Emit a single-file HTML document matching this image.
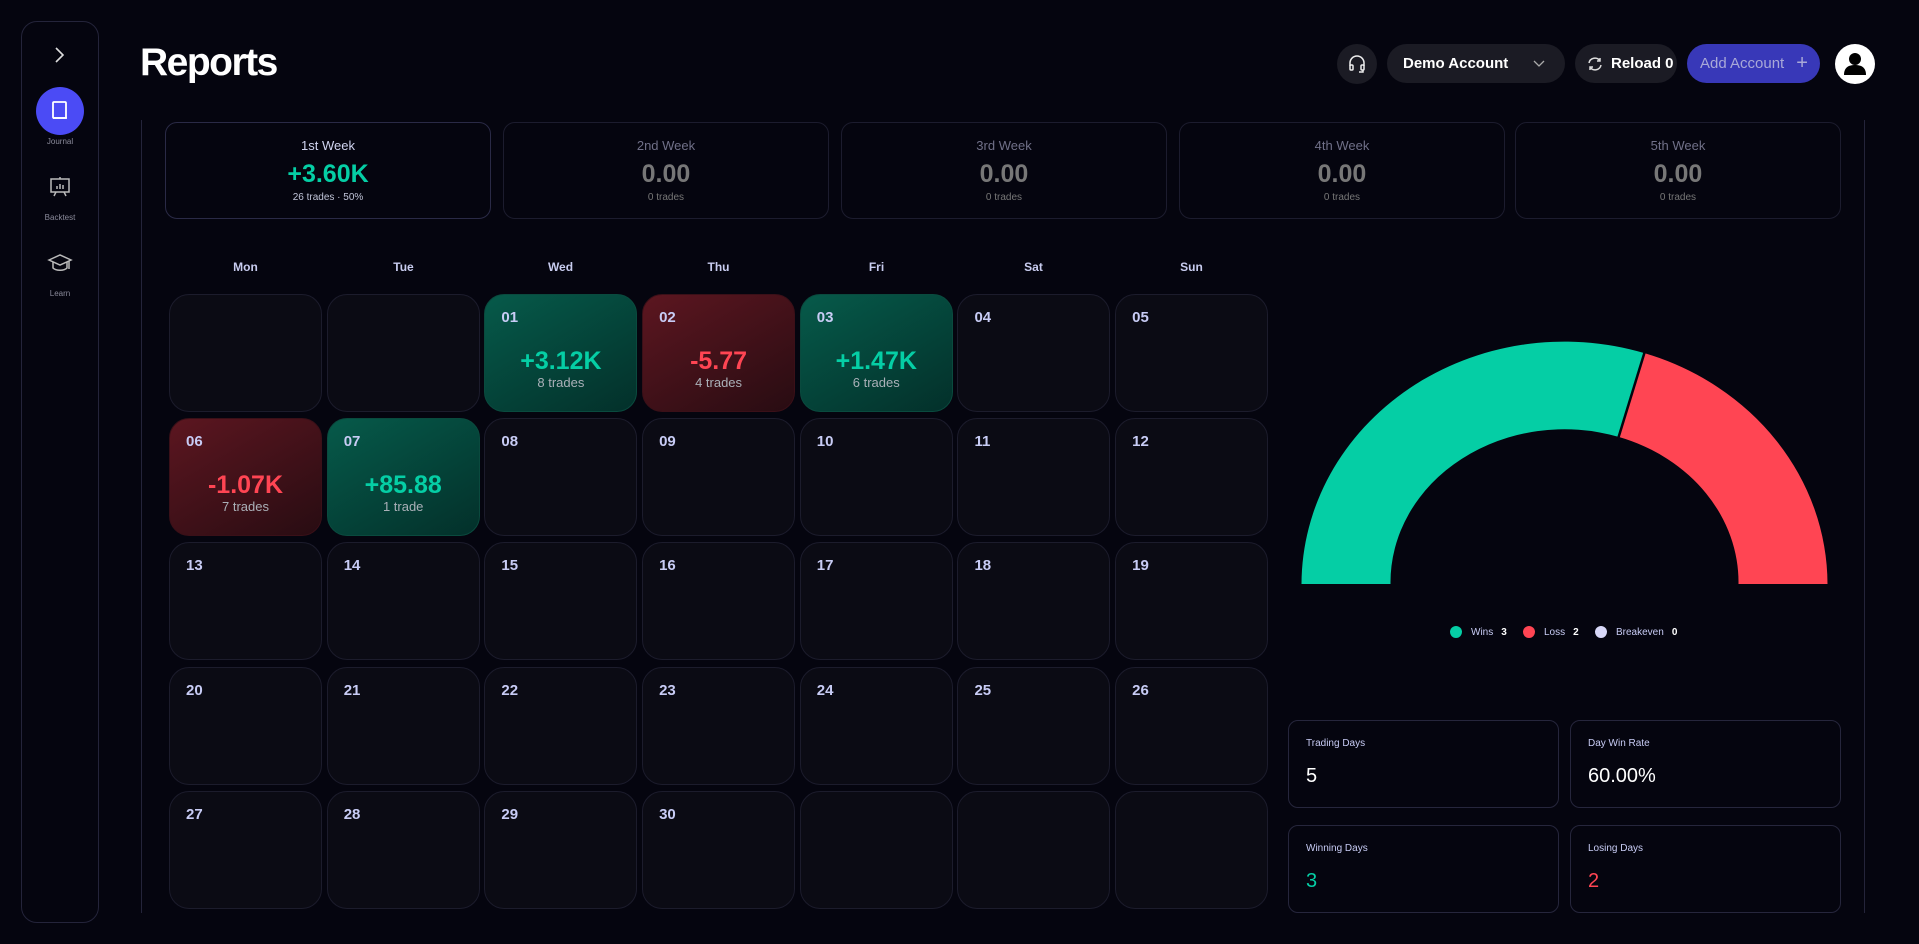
<!DOCTYPE html>
<html><head><meta charset="utf-8"><style>
*{box-sizing:border-box;margin:0;padding:0}
body{width:1919px;height:944px;background:#05050f;font-family:"Liberation Sans",sans-serif;color:#fff;position:relative;overflow:hidden}
.abs{position:absolute}
.side{left:21px;top:21px;width:78px;height:902px;border:1px solid #24243a;border-radius:16px}
.slabel{position:absolute;width:78px;left:21px;text-align:center;font-size:8px;color:#8a8a9a}
h1{position:absolute;left:140px;top:41px;font-size:39px;font-weight:700;letter-spacing:-1.5px}
.pill{position:absolute;top:44px;height:39px;border-radius:20px;background:#1b1b24;font-size:15px;font-weight:700;display:flex;align-items:center}
.wk{position:absolute;top:122px;width:326px;height:97px;border:1px solid #1c1c2e;border-radius:12px;text-align:center}
.wk .l{margin-top:15px;font-size:13px;color:#707088}
.wk .v{margin-top:7px;font-size:25px;font-weight:700;color:#777}
.wk .t{margin-top:3px;font-size:10px;color:#777}
.dh{position:absolute;top:260px;width:153px;text-align:center;font-size:12px;font-weight:700;color:#c8ccef}
.grid{position:absolute;left:169px;top:294px;display:grid;grid-template-columns:repeat(7,153px);grid-auto-rows:118px;column-gap:4.7px;row-gap:6.2px}
.c{border:1px solid #1c1c2c;background:#0b0b14;border-radius:20px;position:relative}
.c .n{position:absolute;left:16px;top:14px;font-size:15px;font-weight:700;color:#c8ccf5}
.c .v{position:absolute;left:0;right:0;top:52px;text-align:center;font-size:25px;font-weight:700}
.c .t{position:absolute;left:0;right:0;top:80px;text-align:center;font-size:13px;color:#aab0b8}
.g{background:linear-gradient(150deg,#065a4a,#03302a);border-color:#0a4a3e}
.g .v{color:#05cea5}
.r{background:linear-gradient(150deg,#5c1620,#280c12);border-color:#3a1018}
.r .v{color:#ff4553}
.st{position:absolute;width:271px;height:88px;border:1px solid #26263c;border-radius:10px}
.st .l{position:absolute;left:17px;top:17px;font-size:10px;color:#c8ccf5}
.st .v{position:absolute;left:17px;top:44px;font-size:20px}
.lg{position:absolute;top:626px;font-size:10px;color:#c8ccf5;display:flex;align-items:center}
.dot{width:12px;height:12px;border-radius:50%;display:inline-block;margin-right:9px}
</style></head><body>
<div class="abs side"></div>
<svg class="abs" style="left:52px;top:46px" width="14" height="18" viewBox="0 0 14 18"><path d="M4 2l7 7-7 7" fill="none" stroke="#ddd" stroke-width="1.6"/></svg>
<div class="abs" style="left:36px;top:87px;width:48px;height:48px;border-radius:50%;background:#4b4bf5"></div>
<svg class="abs" style="left:50px;top:100px" width="20" height="22" viewBox="0 0 20 22"><rect x="3" y="2" width="13" height="16" rx="1" fill="none" stroke="#fff" stroke-width="1.8"/><path d="M3 18h14" stroke="#fff" stroke-width="1.8"/></svg>
<div class="slabel" style="top:137px">Journal</div>
<svg class="abs" style="left:48px;top:175px" width="24" height="24" viewBox="0 0 24 24" fill="none" stroke="#bbb" stroke-width="1.5"><rect x="3" y="4" width="18" height="13"/><path d="M12 2v2M8 17l-2 4M16 17l2 4M9 14v-3M12 14v-5M15 14v-4"/></svg>
<div class="slabel" style="top:213px">Backtest</div>
<svg class="abs" style="left:47px;top:252px" width="26" height="24" viewBox="0 0 26 24" fill="none" stroke="#bbb" stroke-width="1.5"><path d="M2 8l11-5 11 5-11 5z"/><path d="M6 10v6c3 3 11 3 14 0v-6M22 9v8"/></svg>
<div class="slabel" style="top:289px">Learn</div>
<h1>Reports</h1>
<div class="abs" style="left:1337px;top:44px;width:40px;height:40px;border-radius:50%;background:#1b1b24"></div>
<svg class="abs" style="left:1348px;top:54px" width="18" height="20" viewBox="0 0 18 20" fill="none" stroke="#eee" stroke-width="1.5"><path d="M2 12V9a7 7 0 0114 0v3"/><rect x="2" y="11" width="3" height="5" rx="1"/><rect x="13" y="11" width="3" height="5" rx="1"/><path d="M15 16v2h-4"/></svg>
<div class="pill" style="left:1387px;width:178px;padding-left:16px">Demo Account<svg style="position:absolute;right:20px;top:16px" width="12" height="8" viewBox="0 0 12 8"><path d="M1 1l5 5 5-5" fill="none" stroke="#aaa" stroke-width="1.3"/></svg></div>
<div class="pill" style="left:1575px;width:102px;padding-left:12px"><svg width="16" height="16" viewBox="0 0 16 16" fill="none" stroke="#ddd" stroke-width="1.5" style="margin-right:8px"><path d="M2 7a6 6 0 0111-2M14 9a6 6 0 01-11 2M13 2v3h-3M3 14v-3h3"/></svg>Reload 0</div>
<div class="pill" style="left:1687px;width:133px;background:#3838b8;color:#a9a9d8;font-weight:400;padding-left:13px">Add Account<span style="margin-left:12px;font-size:20px;font-weight:300">+</span></div>
<div class="abs" style="left:1835px;top:44px;width:40px;height:40px;border-radius:50%;background:#fff;overflow:hidden"><svg width="40" height="40" viewBox="0 0 40 40"><circle cx="20" cy="15" r="6" fill="#000"/><path d="M9 31c0-8 5-10 11-10s11 2 11 10z" fill="#000"/></svg></div>
<div class="abs" style="left:141px;top:120px;width:1px;height:793px;background:#24243a"></div>
<div class="abs" style="left:1864px;top:120px;width:1px;height:793px;background:#24243a"></div>
<div class="wk" style="left:165px;border-color:#2a2a46"><div class="l" style="color:#d0d4f0">1st Week</div><div class="v" style="color:#05cea5">+3.60K</div><div class="t" style="color:#c0c4d8">26 trades · 50%</div></div>
<div class="wk" style="left:503px"><div class="l">2nd Week</div><div class="v">0.00</div><div class="t">0 trades</div></div>
<div class="wk" style="left:841px"><div class="l">3rd Week</div><div class="v">0.00</div><div class="t">0 trades</div></div>
<div class="wk" style="left:1179px"><div class="l">4th Week</div><div class="v">0.00</div><div class="t">0 trades</div></div>
<div class="wk" style="left:1515px"><div class="l">5th Week</div><div class="v">0.00</div><div class="t">0 trades</div></div>
<div class="dh" style="left:169px">Mon</div><div class="dh" style="left:327px">Tue</div><div class="dh" style="left:484px">Wed</div><div class="dh" style="left:642px">Thu</div><div class="dh" style="left:800px">Fri</div><div class="dh" style="left:957px">Sat</div><div class="dh" style="left:1115px">Sun</div>
<div class="grid">
<div class="c"></div><div class="c"></div>
<div class="c g"><div class="n">01</div><div class="v">+3.12K</div><div class="t">8 trades</div></div>
<div class="c r"><div class="n">02</div><div class="v">-5.77</div><div class="t">4 trades</div></div>
<div class="c g"><div class="n">03</div><div class="v">+1.47K</div><div class="t">6 trades</div></div>
<div class="c"><div class="n">04</div></div><div class="c"><div class="n">05</div></div>
<div class="c r"><div class="n">06</div><div class="v">-1.07K</div><div class="t">7 trades</div></div>
<div class="c g"><div class="n">07</div><div class="v">+85.88</div><div class="t">1 trade</div></div>
<div class="c"><div class="n">08</div></div><div class="c"><div class="n">09</div></div><div class="c"><div class="n">10</div></div><div class="c"><div class="n">11</div></div><div class="c"><div class="n">12</div></div>
<div class="c"><div class="n">13</div></div><div class="c"><div class="n">14</div></div><div class="c"><div class="n">15</div></div><div class="c"><div class="n">16</div></div><div class="c"><div class="n">17</div></div><div class="c"><div class="n">18</div></div><div class="c"><div class="n">19</div></div>
<div class="c"><div class="n">20</div></div><div class="c"><div class="n">21</div></div><div class="c"><div class="n">22</div></div><div class="c"><div class="n">23</div></div><div class="c"><div class="n">24</div></div><div class="c"><div class="n">25</div></div><div class="c"><div class="n">26</div></div>
<div class="c"><div class="n">27</div></div><div class="c"><div class="n">28</div></div><div class="c"><div class="n">29</div></div><div class="c"><div class="n">30</div></div><div class="c"></div><div class="c"></div><div class="c"></div>
</div>
<svg class="abs" style="left:0;top:0" width="1919" height="944">
<path d="M1301.5 584 A263 243 0 0 1 1644 353 L1619 437 A174 153 0 0 0 1390.5 584 Z" fill="#05cea5"/>
<path d="M1644 353 A263 243 0 0 1 1827.5 584 L1738.5 584 A174 153 0 0 0 1619 437 Z" fill="#ff4553"/>
<line x1="1645" y1="351" x2="1618" y2="439" stroke="#05050f" stroke-width="2.5"/>
</svg>
<div class="lg" style="left:1450px"><span class="dot" style="background:#05cea5"></span>Wins<b style="margin-left:8px;color:#fff">3</b></div>
<div class="lg" style="left:1523px"><span class="dot" style="background:#ff4553"></span>Loss<b style="margin-left:8px;color:#fff">2</b></div>
<div class="lg" style="left:1595px"><span class="dot" style="background:#d8d8f8"></span>Breakeven<b style="margin-left:8px;color:#fff">0</b></div>
<div class="st" style="left:1288px;top:720px"><div class="l">Trading Days</div><div class="v">5</div></div>
<div class="st" style="left:1570px;top:720px"><div class="l">Day Win Rate</div><div class="v">60.00%</div></div>
<div class="st" style="left:1288px;top:825px"><div class="l">Winning Days</div><div class="v" style="color:#05cea5">3</div></div>
<div class="st" style="left:1570px;top:825px"><div class="l">Losing Days</div><div class="v" style="color:#ff4553">2</div></div>
</body></html>
